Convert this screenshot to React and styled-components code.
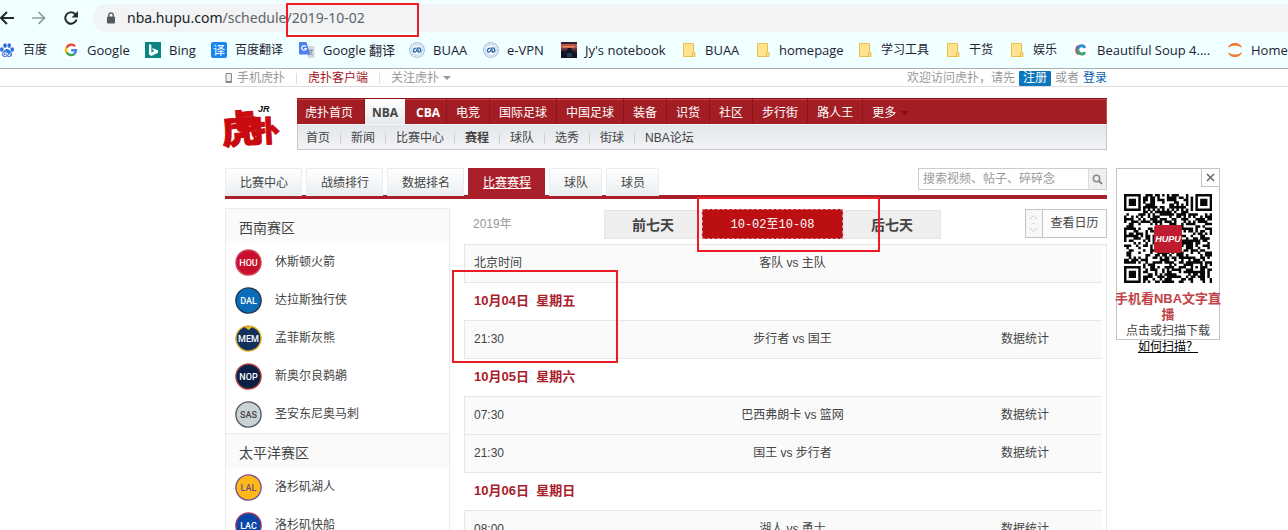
import React from 'react';
import styled, { createGlobalStyle, css } from 'styled-components';

const GlobalStyle = createGlobalStyle`
  *, *::before, *::after { box-sizing: border-box; }
  body {
    margin: 0;
    background: #fff;
    color: #444;
    font: 12px/16px "Liberation Sans", "Noto Sans CJK SC", sans-serif;
  }
  a { color: inherit; text-decoration: none; }
  button, input { font: inherit; color: inherit; }
  ul { margin: 0; padding: 0; list-style: none; }
`;

const Screen = styled.div`
  height: 100vh;
  overflow: hidden;
`;

/* ---------- browser chrome ---------- */

const Chrome = styled.header`
  position: relative;
  padding-top: 4px;
  background: #f0ffff;
  border-bottom: 1px solid #a5b0b0;
  overflow: hidden;
`;

const AddressRow = styled.div`
  display: flex;
  align-items: center;
  height: 28px;
`;

const ToolButton = styled.button`
  display: flex;
  flex: none;
  width: 32px;
  padding: 0;
  border: 0;
  background: none;
  &:first-child { width: 31px; }
`;

const AddressField = styled.label`
  display: flex;
  flex: 1;
  align-items: center;
  gap: 10px;
  height: 28px;
  margin-left: -2px;
  padding-left: 12px;
  background: #f1f3f4;
  border-radius: 14px 0 0 14px;
`;

const Url = styled.span`
  font: 14px/20px "Noto Sans", sans-serif;
  color: #5f6368;
  b { font-weight: 400; color: #202124; }
`;

const Bookmarks = styled.nav`
  display: flex;
  height: 36px;
  margin-left: -1px;
  align-items: center;
`;

const Bookmark = styled.a`
  display: flex;
  flex: none;
  align-items: center;
  gap: 8px;
  width: ${(p) => p.$width}px;
  color: #223;
  white-space: nowrap;
  font: ${(p) => (p.$cjk ? 12 : 13)}px/18px "Open Sans", "Noto Sans CJK SC", sans-serif;
  svg { flex: none; }
`;

/* ---------- site top bar ---------- */

const TopBar = styled.div`
  padding-left: 44px;
  border-bottom: 1px solid #ddd;
`;

const TopBarInner = styled.div`
  display: flex;
  align-items: center;
  justify-content: space-between;
  max-width: 882px;
  height: 17px;
  margin: 0 auto;
  padding-top: 1px;
  color: #999;
`;

const TopGroup = styled.div`
  display: flex;
  align-items: center;
  gap: ${(p) => p.$gap}px;
`;

const TopLink = styled.a`
  display: flex;
  align-items: center;
  gap: 4px;
  color: ${(p) => p.$color || '#999'};
`;

const Divider = styled.i`
  width: 1px;
  height: 11px;
  background: ${(p) => p.$color || '#ddd'};
`;

const Register = styled.a`
  padding: 0 4px;
  line-height: 15px;
  border-radius: 1px;
  background: #0b76bd;
  color: #fff;
`;

const Caret = styled.i`
  border: 4px solid transparent;
  border-bottom-width: 0;
  border-top-color: ${(p) => p.$color};
`;

/* ---------- page ---------- */

const Page = styled.div`
  display: flex;
  justify-content: center;
  gap: 9px;
  padding: 11px 0 0 157px;
`;

const Content = styled.div`
  flex: 0 1 882px;
  min-width: 0;
`;

const Masthead = styled.div`
  display: flex;
  gap: 18px;
`;

const LogoLink = styled.a`
  flex: none;
  width: 54px;
  padding-top: 5px;
  svg { display: block; overflow: visible; }
`;

const SiteNav = styled.nav`
  flex: 1;
  white-space: nowrap;
`;

const MainMenu = styled.div`
  display: flex;
  height: 26px;
  padding-left: 8px;
  background: #a21e24;
  border-top: 1px solid #8b0d13;
  box-shadow: inset -1px 1px 0 #c4474d;
  color: #fff;
`;

const MenuLink = styled.a`
  display: flex;
  align-items: center;
  gap: 5px;
  padding: 3px 9px 0;
  border-right: 1px solid #8e161b;
  &:first-child { padding-left: 0; padding-right: 11px; }
  &:last-child { border: 0; }
  ${(p) => p.$bold && css`
    font-family: "Open Sans", sans-serif;
    font-weight: 700;
    padding-left: 11px;
    padding-right: 6px;
  `}
  ${(p) => p.$active && css`
    justify-content: center;
    width: 40px;
    padding: 3px 0 0;
    border: 0;
    background: linear-gradient(#fff, #e6e9ed);
    color: #444;
  `}
`;

const SubMenu = styled.div`
  display: flex;
  align-items: center;
  gap: 10px;
  height: 26px;
  padding: 2px 0 0 8px;
  background: linear-gradient(#e2e6ea, #f2f3f6);
  border: 1px solid #c6c6c6;
  border-top-color: #f6f6f6;
`;

const SubLink = styled.a`
  font-weight: ${(p) => (p.$active ? 700 : 400)};
`;

const TabBar = styled.div`
  display: flex;
  align-items: flex-start;
  justify-content: space-between;
  height: 31px;
  margin-top: 18px;
  border-bottom: 4px solid #a9202a;
`;

const Tabs = styled.nav`
  display: flex;
  gap: 4px;
`;

const Tab = styled.a`
  height: 28px;
  padding: 0 13px 0 14px;
  border: 1px solid #e9edef;
  border-bottom: 0;
  background: linear-gradient(#fff, #eaeef0);
  line-height: 28px;
  ${(p) => p.$active && css`
    border-color: #a9202a;
    background: #a9202a;
    color: #fff;
    text-decoration: underline;
  `}
`;

const Search = styled.form`
  display: flex;
  width: 189px;
  height: 22px;
  border: 1px solid #ccc;
`;

const SearchInput = styled.input`
  flex: 1;
  min-width: 0;
  padding: 0 4px;
  border: 0;
  outline: 0;
  &::placeholder { color: #999; opacity: 1; }
`;

const SearchButton = styled.button`
  display: flex;
  align-items: center;
  justify-content: center;
  width: 18px;
  padding: 0;
  border: 0;
  border-left: 1px solid #ddd;
  background: #f0f0f0;
`;

const Columns = styled.div`
  display: flex;
  gap: 14px;
  margin-top: 9px;
`;

const Sidebar = styled.aside`
  flex: none;
  width: 225px;
  border: 1px solid #ececec;
  border-top: 0;
`;

const Division = styled.h2`
  height: 35px;
  margin: 0;
  padding: 3px 13px 0;
  border-top: 1px solid #ececec;
  background: #fafafa;
  font-size: 14px;
  font-weight: 400;
  line-height: 33px;
`;

const TeamLink = styled.a`
  display: flex;
  align-items: center;
  gap: 13px;
  height: 38px;
  padding-left: 9px;
`;

/* ---------- schedule ---------- */

const Schedule = styled.main`
  position: relative;
  flex: 1;
  min-width: 0;
`;

const Controls = styled.div`
  display: flex;
  align-items: flex-start;
  height: 36px;
  padding-top: 1px;
  line-height: 30px;
`;

const Year = styled.span`
  width: 140px;
  padding-left: 9px;
  color: #999;
`;

const WeekButton = styled.button`
  width: 98px;
  height: 29px;
  margin-top: 1px;
  padding: 0;
  border: 1px solid #e5e5e5;
  background: #eee;
  color: #444;
  font-size: 14px;
  line-height: 26px;
  font-weight: 700;
`;

const CurrentWeek = styled.button`
  width: 141px;
  height: 30px;
  padding: 0;
  border: 1px dashed #d98a8c;
  background: #bb0f14;
  color: #fff;
  font-family: "Liberation Mono", "Noto Sans CJK SC", monospace;
`;

const CalendarButton = styled.button`
  display: flex;
  width: 82px;
  height: 29px;
  margin-left: auto;
  padding: 0;
  border: 1px solid #c4c4c4;
  background: #fcfcfc;
  line-height: 27px;
  svg { border-right: 1px solid #c4c4c4; background: #f7f7f7; }
  span { flex: 1; }
`;

const TableFrame = styled.div`
  padding-right: 4px;
  border: 1px solid #e6e6e6;
  border-width: 1px 1px 0 0;
`;

const Games = styled.table`
  width: 100%;
  table-layout: fixed;
  border-spacing: 0;
  td, th {
    height: 38px;
    padding: 0 0 2px;
    border-bottom: 1px solid #e6e6e6;
    font-weight: 400;
    text-align: left;
  }
`;

const GameRow = styled.tr`
  background: #fafafa;
  td:first-child, th:first-child { padding-left: 9px; border-left: 1px solid #e6e6e6; }
  td:nth-child(2), th:nth-child(2) { text-align: center; }
`;

const DateRow = styled.tr`
  && th {
    padding-left: 10px;
    color: #a9202a;
    font-size: 13px;
    font-weight: 700;
    white-space: pre;
  }
`;

/* ---------- floating promo ---------- */

const Promo = styled.aside`
  flex: none;
  width: 104px;
  height: 172px;
  margin-top: 70px;
  border: 1px solid #c4c4c4;
  text-align: center;
`;

const CloseButton = styled.button`
  display: block;
  width: 19px;
  height: 19px;
  margin: -1px -1px 7px auto;
  padding: 0;
  border: 1px solid #c4c4c4;
  background: #fff;
  line-height: 0;
`;

const PromoTitle = styled.strong`
  display: block;
  margin: 4px -4px 0;
  color: #bf4347;
  font-size: 13px;
`;

const PromoLink = styled.a`
  display: block;
  color: #000;
  text-decoration: underline;
`;

/* Red frames drawn over the page to point things out. */
const Marker = styled.div`
  position: absolute;
  z-index: 2;
  left: ${(p) => p.$x}px;
  top: ${(p) => p.$y}px;
  width: ${(p) => p.$w}px;
  height: ${(p) => p.$h}px;
  border: 2px solid #ed1c24;
  pointer-events: none;
`;

/* ---------- drawings ---------- */

const Icon = ({ children, size = 16, ...rest }) => (
  <svg width={size} height={size} viewBox="0 0 16 16" fill="none" aria-hidden="true" {...rest}>{children}</svg>
);

const Paw = () => (
  <Icon fill="#2a6fe0">
    <path fill="#fff" d="M0 0h16v16H0z" />
    <ellipse cx="2.8" cy="7.6" rx="1.8" ry="2.3" />
    <ellipse cx="6" cy="3.6" rx="1.8" ry="2.4" />
    <ellipse cx="10.2" cy="3.6" rx="1.8" ry="2.4" />
    <ellipse cx="13.2" cy="7.6" rx="1.8" ry="2.3" />
    <path d="M8 7c2 0 3 2 4.400 3.600C14 13 12.500 15 10.500 15c-1 0-1.600-.4-2.500-.4S6.500 15 5.500 15C3.500 15 2 13 3.600 10.600 5 9 6 7 8 7z" />
    <path stroke="#fff" strokeWidth="1" fill="none" d="M7 9.500v4H5.500a1.200 1.200 0 010-2.500H7M8.700 11v1.600c0 .8.4 1 1 1h1.300V11" />
  </Icon>
);

const GoogleG = () => (
  <Icon strokeWidth="2.400">
    <path fill="#fff" d="M0 0h16v16H0z" />
    <path stroke="#ea4335" d="M12 4.300A5 5 0 003.600 5.800" />
    <path stroke="#fbbc05" d="M3.600 5.600a5 5 0 000 4.800" />
    <path stroke="#34a853" d="M3.600 10.300a5 5 0 007.800 1.500" />
    <path stroke="#4285f4" d="M11.200 12A5 5 0 0013 8.200H8.200" />
  </Icon>
);

const Bing = () => (
  <Icon>
    <path fill="#0c8484" d="M0 0h16v16H0z" />
    <path fill="#fff" d="M4 2l2.400.9v7.700L9.500 9 8 8.300 7 6l6 2.200v2.600L6.400 14 4 12.600z" />
  </Icon>
);

const Yi = () => (
  <Icon>
    <rect width="16" height="16" rx="2" fill="#1a87f0" />
    <text x="8" y="12.500" fontSize="12" textAnchor="middle" fill="#fff" fontFamily="Noto Sans CJK SC">译</text>
  </Icon>
);

const Translate = () => (
  <Icon>
    <path fill="#d5d8dc" d="M6 4h9.500v12H9z" />
    <path stroke="#7b8796" d="M9 8.500h5M11.500 7.500v1M13 8.500c-.5 2-2 3.500-3.500 4.500M10 9.500c.5 1.500 2 3 3.500 3.500" />
    <path fill="#4b80ee" d="M0 0h7.500L11 12.500H1a1 1 0 01-1-1z" />
    <path stroke="#fff" strokeWidth="1.200" d="M7 4.700a2.300 2.300 0 10.300 1.800H5.200" />
  </Icon>
);

const Seal = () => (
  <Icon>
    <circle cx="8" cy="8" r="7.300" fill="#eef5fb" stroke="#8fb3d6" strokeWidth="1.200" strokeDasharray="1.500 .6" />
    <circle cx="8" cy="8" r="5.300" fill="#fff" stroke="#9dbddb" strokeWidth=".7" />
    <path stroke="#1d5fa5" strokeWidth="1.300" d="M7.500 6.200C4 5.800 3.700 10.300 6 10.200 8 10 7.500 7 9 6.200M8.500 6c4-.6 4 3.500 1.800 4.100C8.500 10.400 8.500 8 10 7.800" />
  </Icon>
);

const Sunset = () => (
  <Icon>
    <path fill="#38202e" d="M0 0h16v16H0z" />
    <path fill="#b4584d" d="M0 2h16v4H0z" />
    <path fill="#e98a63" d="M2 4h11v1.500H2z" />
    <path fill="#6f3540" d="M0 6h16v2H0z" />
    <path fill="#11141f" d="M0 9l5 1 2-4h3l2 4 4 1v5H0z" />
    <path fill="#243a5e" d="M6 11h5v4H6z" />
  </Icon>
);

const Folder = () => (
  <Icon>
    <path fill="#ffe38f" stroke="#e9c04e" d="M2.500 1.500h10v9h1.500v4H2.500z" />
    <path stroke="#e9c04e" d="M11.500 14v-3.500h2" />
  </Icon>
);

const LetterC = () => (
  <Icon strokeWidth="3">
    <path fill="#fff" d="M0 0h16v16H0z" />
    <path stroke="#d8434e" d="M5.500 4.300a4.600 4.600 0 000 7.400" />
    <path stroke="#2f8fd0" d="M12 5.800A3.800 3.800 0 005.500 5.300a4 4 0 00-.6 2.700" />
    <path stroke="#3aa57a" d="M5 8.500A3.800 3.800 0 0012 10.200" />
  </Icon>
);

const Jupyter = () => (
  <Icon fill="#f37726">
    <path d="M1 6C2.500-.8 13.500-.8 15 6 11.500 2.600 4.500 2.600 1 6zM1 10c1.500 6.800 12.500 6.800 14 0-3.500 3.400-10.500 3.400-14 0z" />
  </Icon>
);

const Logo = () => (
  <svg width="54" height="46" viewBox="0 0 54 46" role="img" aria-label="虎扑 JR" fontFamily="Noto Sans CJK SC" fontWeight="900">
    <g fill="#c90a0e" stroke="#c90a0e" strokeWidth="1">
      <text x="-4" y="40" fontSize="38" transform="rotate(-5 14 24)">虎</text>
      <text x="26" y="39" fontSize="29" transform="rotate(-3 38 28)">扑</text>
    </g>
    <text x="33" y="9" fontSize="9" fontStyle="italic" fontFamily="Liberation Sans" fill="#111">JR</text>
  </svg>
);

const QR_SIZE = 37;
const finder = (x, y) => {
  const d = Math.max(Math.abs(x - 3), Math.abs(y - 3));
  return d === 4 ? 0 : d === 2 ? 0 : 1;
};
const qrModule = (x, y) => {
  const end = QR_SIZE - 8;
  if (x < 8 && y < 8) return finder(x, y);
  if (x >= end && y < 8) return finder(QR_SIZE - 1 - x, y);
  if (x < 8 && y >= end) return finder(x, QR_SIZE - 1 - y);
  const a = Math.max(Math.abs(x - 30), Math.abs(y - 30));
  if (a < 3) return a === 1 ? 0 : 1;
  if (x === 6 || y === 6) return (x + y + 1) % 2;
  const n = Math.sin(x * 12.9898 + y * 78.233) * 43758.5453;
  return n - Math.floor(n) > 0.48 ? 1 : 0;
};
const qrPath = Array.from({ length: QR_SIZE * QR_SIZE }, (_, i) => {
  const x = i % QR_SIZE;
  const y = Math.floor(i / QR_SIZE);
  return qrModule(x, y) ? `M${x} ${y}h1.050v1.050h-1.050z` : '';
}).join('');

const QrCode = () => (
  <svg width="88" height="89" viewBox="0 0 88 89" role="img" aria-label="HUPU">
    <path d={qrPath} transform="scale(2.380 2.400)" fill="#080808" />
    <rect x="30" y="31" width="28" height="28" rx="3" fill="#c01c30" />
    <text x="44" y="48" fontSize="9" fontWeight="700" fontStyle="italic" textAnchor="middle" fill="#fff" fontFamily="Liberation Sans">HUPU</text>
  </svg>
);

const Badge = ({ code, fill, ring, ink = '#fff', notch }) => (
  <svg width="27" height="27" viewBox="0 0 27 27" aria-hidden="true">
    <circle cx="13.500" cy="13.500" r="12.600" fill={fill} stroke={ring} strokeWidth="1.400" />
    {notch && <path d="M9 1.500h9L13.500 5z" fill={notch} />}
    <text x="13.500" y="17" fontSize="9" fontWeight="500" textAnchor="middle" fill={ink} fontFamily="Roboto">{code}</text>
  </svg>
);

/* ---------- data ---------- */

const bookmarks = [
  ['百度', Paw, 64, true],
  ['Google', GoogleG, 82],
  ['Bing', Bing, 66],
  ['百度翻译', Yi, 88, true],
  ['Google 翻译', Translate, 110],
  ['BUAA', Seal, 74],
  ['e-VPN', Seal, 78],
  ["Jy's notebook", Sunset, 120],
  ['BUAA', Folder, 74],
  ['homepage', Folder, 102],
  ['学习工具', Folder, 88, true],
  ['干货', Folder, 64, true],
  ['娱乐', Folder, 64, true],
  ['Beautiful Soup 4....', LetterC, 154],
  ['Home', Jupyter, 80],
];

const mainMenu = ['虎扑首页', 'NBA', 'CBA', '电竞', '国际足球', '中国足球', '装备', '识货', '社区', '步行街', '路人王', '更多'];
const subMenu = ['首页', '新闻', '比赛中心', '赛程', '球队', '选秀', '街球', 'NBA论坛'];
const tabs = ['比赛中心', '战绩排行', '数据排名', '比赛赛程', '球队', '球员'];

const divisions = [
  ['西南赛区', [
    { name: '休斯顿火箭', code: 'HOU', fill: '#c8102e', ring: '#d04a5c' },
    { name: '达拉斯独行侠', code: 'DAL', fill: '#0b6cb8', ring: '#20364f' },
    { name: '孟菲斯灰熊', code: 'MEM', fill: '#14315c', ring: '#e5b93a', notch: '#f6b91c' },
    { name: '新奥尔良鹈鹕', code: 'NOP', fill: '#0a1f45', ring: '#b5473c' },
    { name: '圣安东尼奥马刺', code: 'SAS', fill: '#cbd2d6', ring: '#555b60', ink: '#444' },
  ]],
  ['太平洋赛区', [
    { name: '洛杉矶湖人', code: 'LAL', fill: '#fdb91a', ring: '#7f5190', ink: '#714b80' },
    { name: '洛杉矶快船', code: 'LAC', fill: '#0846a8', ring: '#a03a5c' },
  ]],
];

const schedule = [
  ['10月04日  星期五', [['21:30', '步行者 vs 国王']]],
  ['10月05日  星期六', [['07:30', '巴西弗朗卡 vs 篮网'], ['21:30', '国王 vs 步行者']]],
  ['10月06日  星期日', [['08:00', '湖人 vs 勇士']]],
];

/* ---------- sections ---------- */

const BrowserChrome = () => (
  <Chrome>
    <AddressRow>
      <ToolButton aria-label="后退">
        <Icon stroke="#222a2a" strokeWidth="2"><path d="M14 8H1M7 2L1 8l6 6" /></Icon>
      </ToolButton>
      <ToolButton aria-label="前进">
        <Icon stroke="#8c9b9b" strokeWidth="1.700"><path d="M1 8h12M7.500 2l6 6-6 6" /></Icon>
      </ToolButton>
      <ToolButton aria-label="刷新">
        <Icon stroke="#222a2a" strokeWidth="2"><path d="M13.500 9.500A5.700 5.700 0 1112 4l1.500 1.500" /><path fill="#222a2a" stroke="none" d="M15 1v6.500H8.500z" /></Icon>
      </ToolButton>
      <AddressField>
        <svg width="12" height="12" viewBox="0 0 12 12" aria-hidden="true">
          <rect x="2" y="4.500" width="8" height="7" rx="1" fill="#555a5e" />
          <path d="M3.800 5V3a2.200 2.200 0 014.400 0v2" fill="none" stroke="#555a5e" strokeWidth="1.300" />
        </svg>
        <Url><b>nba.hupu.com</b>/schedule/2019-10-02</Url>
      </AddressField>
    </AddressRow>
    <Bookmarks>
      {bookmarks.map(([label, Glyph, width, cjk], i) => (
        <Bookmark key={i} href="#" $width={width} $cjk={cjk}><Glyph />{label}</Bookmark>
      ))}
    </Bookmarks>
    <Marker $x={286} $y={3} $w={133} $h={34} />
  </Chrome>
);

const AccountBar = () => (
  <TopBar>
    <TopBarInner>
      <TopGroup $gap={11}>
        <TopLink href="#">
          <svg width="8" height="10" viewBox="0 0 8 10" aria-hidden="true"><path d="M1 .5h5.500v9H1z" fill="#eee" stroke="#888" /><path d="M1 8.500h5.500" stroke="#888" /></svg>
          手机虎扑
        </TopLink>
        <Divider />
        <TopLink href="#" $color="#a0141c">虎扑客户端</TopLink>
        <Divider />
        <TopLink href="#">关注虎扑<Caret $color="#999" /></TopLink>
      </TopGroup>
      <TopGroup $gap={4}>
        <span>欢迎访问虎扑，请先</span>
        <Register href="#">注册</Register>
        <span>或者</span>
        <TopLink href="#" $color="#0a5fae">登录</TopLink>
      </TopGroup>
    </TopBarInner>
  </TopBar>
);

const WeekControls = () => (
  <Controls>
    <Year>2019年</Year>
    <WeekButton>前七天</WeekButton>
    <CurrentWeek>10-02至10-08</CurrentWeek>
    <WeekButton>后七天</WeekButton>
    <CalendarButton>
      <svg width="17" height="27" viewBox="0 0 17 27" fill="none" stroke="#ccc" aria-hidden="true">
        <path d="M4 9l4-4 4 4M4 18l4 4 4-4M7 13.500h2" />
      </svg>
      <span>查看日历</span>
    </CalendarButton>
  </Controls>
);

const GameTable = () => (
  <TableFrame>
    <Games>
      <colgroup><col style={{ width: 120 }} /><col /><col style={{ width: 101 }} /></colgroup>
      <thead>
        <GameRow><th>北京时间</th><th>客队 vs 主队</th><th /></GameRow>
      </thead>
      {schedule.map(([date, games]) => (
        <tbody key={date}>
          <DateRow><th colSpan={3}>{date}</th></DateRow>
          {games.map(([time, match]) => (
            <GameRow key={time}><td>{time}</td><td>{match}</td><td><a href="#">数据统计</a></td></GameRow>
          ))}
        </tbody>
      ))}
    </Games>
  </TableFrame>
);

export default function App() {
  return (
    <Screen>
      <GlobalStyle />
      <BrowserChrome />
      <AccountBar />
      <Page>
        <Content>
          <Masthead>
            <LogoLink href="#"><Logo /></LogoLink>
            <SiteNav>
              <MainMenu>
                {mainMenu.map((label) => (
                  <MenuLink key={label} href="#" $active={label === 'NBA'} $bold={label === 'NBA' || label === 'CBA'}>
                    {label}
                    {label === '更多' && <Caret $color="#7d0e13" />}
                  </MenuLink>
                ))}
              </MainMenu>
              <SubMenu>
                {subMenu.map((label, i) => (
                  <React.Fragment key={label}>
                    {i > 0 && <Divider $color="#cfcfcf" />}
                    <SubLink href="#" $active={label === '赛程'}>{label}</SubLink>
                  </React.Fragment>
                ))}
              </SubMenu>
            </SiteNav>
          </Masthead>
          <TabBar>
            <Tabs>
              {tabs.map((label) => <Tab key={label} href="#" $active={label === '比赛赛程'}>{label}</Tab>)}
            </Tabs>
            <Search>
              <SearchInput aria-label="搜索" placeholder="搜索视频、帖子、碎碎念" />
              <SearchButton type="button" aria-label="搜索">
                <svg width="11" height="11" viewBox="0 0 11 11" fill="none" stroke="#888" aria-hidden="true">
                  <circle cx="4.500" cy="4.500" r="3.200" strokeWidth="1.500" /><path d="M7 7l3 3" strokeWidth="2" />
                </svg>
              </SearchButton>
            </Search>
          </TabBar>
          <Columns>
            <Sidebar>
              {divisions.map(([name, teams]) => (
                <section key={name}>
                  <Division>{name}</Division>
                  <ul>
                    {teams.map((team) => (
                      <li key={team.code}><TeamLink href="#"><Badge {...team} />{team.name}</TeamLink></li>
                    ))}
                  </ul>
                </section>
              ))}
            </Sidebar>
            <Schedule>
              <WeekControls />
              <GameTable />
              <Marker $x={233} $y={-11} $w={183} $h={55} />
              <Marker $x={-12} $y={62} $w={166} $h={93} />
            </Schedule>
          </Columns>
        </Content>
        <Promo>
          <CloseButton aria-label="关闭">
            <svg width="9" height="9" viewBox="0 0 9 9" stroke="#666" strokeWidth="1.500" aria-hidden="true"><path d="M1 1l7 7M8 1L1 8" /></svg>
          </CloseButton>
          <QrCode />
          <PromoTitle>手机看NBA文字直<br />播</PromoTitle>
          点击或扫描下载
          <PromoLink href="#">如何扫描？</PromoLink>
        </Promo>
      </Page>
    </Screen>
  );
}
